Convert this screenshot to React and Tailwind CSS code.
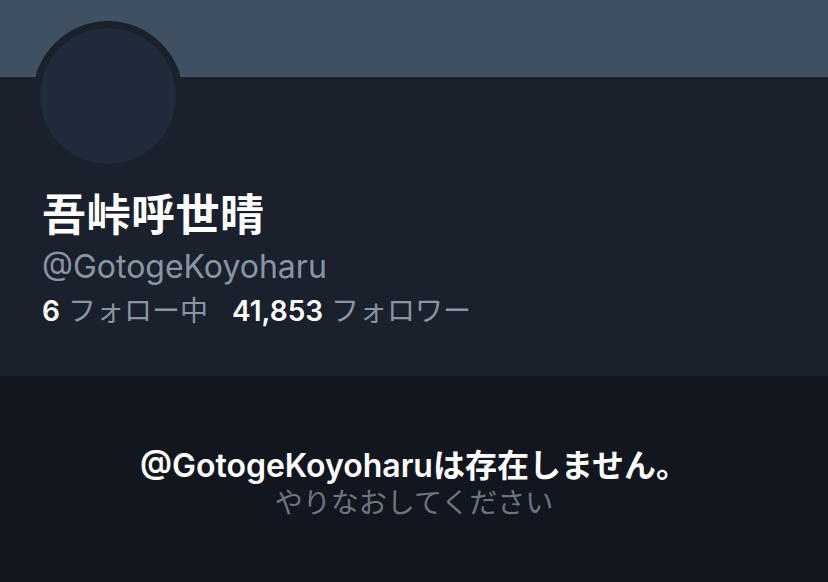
export default function App() {
  return (
    <div className="w-[828px] h-[582px] overflow-hidden bg-[#12161e] flex flex-col font-['Inter','Noto_Sans_CJK_JP',sans-serif]">
      {/* header + profile */}
      <div className="bg-[#1a202c] h-[376px] flex flex-col">
        <div className="h-[77px] bg-[#3e5061] border-b border-[#4a5a6c] shrink-0" />
        <div className="relative px-[42px]">
          <div className="absolute left-[33px] top-[-56px] w-[150px] h-[150px] rounded-full bg-[#19212c] flex items-center justify-center">
            <div className="w-[136px] h-[136px] rounded-full bg-[#1f2a3a]" />
          </div>
          <div className="pt-[110px]">
            <h1 className="text-[44px] leading-[56px] font-bold text-white tracking-[0.5px]">吾峠呼世晴</h1>
            <div className="text-[32px] leading-[36px] text-[#8896a3] mt-[6px]">@GotogeKoyoharu</div>
            <div className="text-[28px] leading-[36px] mt-[8px] text-[#8896a3]">
              <span className="text-white font-semibold">6</span>
              <span className="ml-[8px]">フォロー中</span>
              <span className="text-white font-semibold ml-[24px]">41,853</span>
              <span className="ml-[8px]">フォロワー</span>
            </div>
          </div>
        </div>
      </div>
      {/* not found message */}
      <div className="flex flex-col items-center pt-[71px]">
        <div className="text-[32px] leading-[38px] font-semibold text-white">@GotogeKoyoharuは存在しません。</div>
        <div className="text-[28px] leading-[36px] text-[#6c7682]">やりなおしてください</div>
      </div>
    </div>
  );
}
